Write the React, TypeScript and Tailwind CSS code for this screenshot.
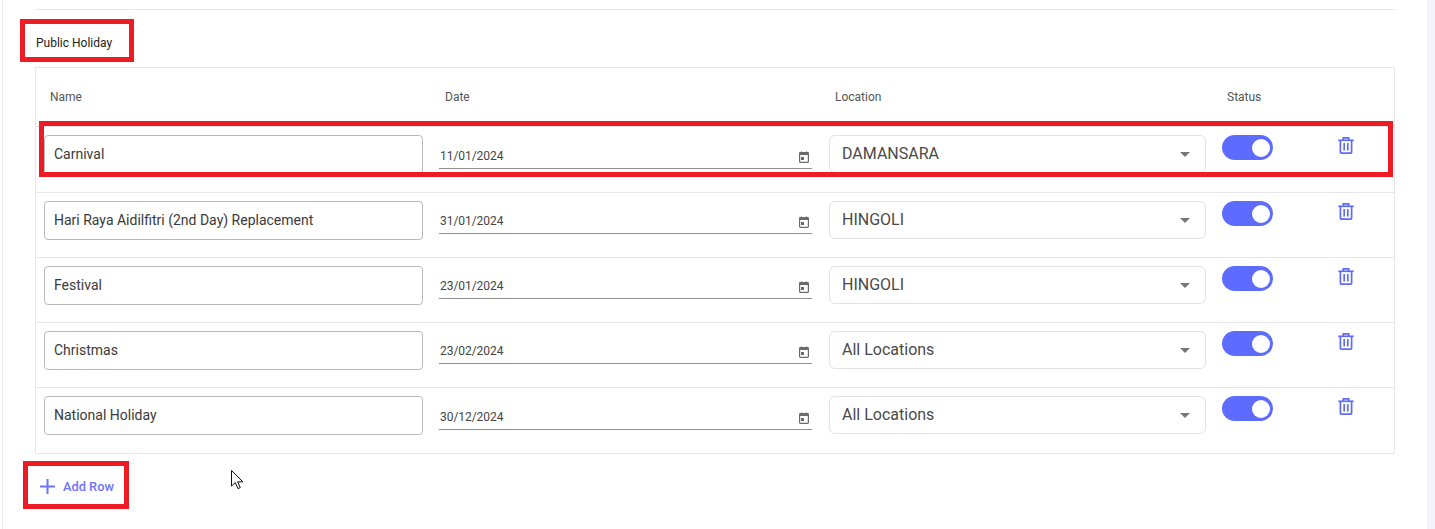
const rows = [
  { name: "Carnival", date: "11/01/2024", loc: "DAMANSARA", h: "h-[66px]", datePad: "pt-[8px]" },
  { name: "Hari Raya Aidilfitri (2nd Day) Replacement", date: "31/01/2024", loc: "HINGOLI", h: "h-[65px]", datePad: "pt-[7px]" },
  { name: "Festival", date: "23/01/2024", loc: "HINGOLI", h: "h-[65px]", datePad: "pt-[7px]" },
  { name: "Christmas", date: "23/02/2024", loc: "All Locations", h: "h-[65px]", datePad: "pt-[7px]" },
  { name: "National Holiday", date: "30/12/2024", loc: "All Locations", h: "h-[65px]", datePad: "pt-[8px]" },
];

function CalendarIcon() {
  return (
    <svg width="10" height="12" viewBox="0 0 10 12" className="shrink-0">
      <path d="M2.5 0.5v2M7.5 0.5v2" stroke="#6b6b6b" strokeWidth="1.2" />
      <rect x="0.6" y="1.6" width="8.8" height="9.8" rx="0.8" fill="none" stroke="#6b6b6b" strokeWidth="1.2" />
      <rect x="0.6" y="1.6" width="8.8" height="2.4" fill="#6b6b6b" />
      <rect x="2" y="6" width="3" height="3" fill="#6b6b6b" />
    </svg>
  );
}

function TrashIcon() {
  return (
    <svg width="16" height="17" viewBox="0 0 16 17" fill="none" stroke="#5f6bf5" strokeWidth="1.7">
      <path d="M0.3 3.3h15.4" />
      <path d="M5.3 3V0.9h5.4V3" />
      <path d="M2.4 3.3v11.6c0 .8.5 1.3 1.3 1.3h8.6c.8 0 1.3-.5 1.3-1.3V3.3" />
      <path d="M6.2 6v7.5M9.8 6v7.5" />
    </svg>
  );
}

function Row({ r, last }: { r: (typeof rows)[number]; last: boolean }) {
  return (
    <div className={"grid grid-cols-[395px_390px_393px_116px_1fr] " + r.h + (last ? "" : " border-b border-[#e5e7eb]")}>
      <div className="pl-2 pr-2 pt-2">
        <div className="h-[39px] border border-[#b9b9b9] rounded-[4px] flex items-center pl-[9px] text-[14px] text-[#3a3a3a]">
          {r.name}
        </div>
      </div>
      <div className={"pl-2 pr-[9px] " + r.datePad}>
        <div className="h-[34px] border-b border-[#8f8f8f] flex items-end justify-between pb-[5px] pr-[3px]">
          <span className="text-[12px] leading-[14px] tracking-[-0.05px] text-[#444] pl-px">{r.date}</span>
          <CalendarIcon />
        </div>
      </div>
      <div className="pl-2 pr-2 pt-2">
        <div className="h-[38px] border border-[#e2e2e8] rounded-[6px] flex items-center justify-between pl-3 pr-[15px] text-[16px] text-[#4a4a4a]">
          <span>{r.loc}</span>
          <span className="w-0 h-0 border-x-[5.5px] border-x-transparent border-t-[5px] border-t-[#777]" />
        </div>
      </div>
      <div className="pl-2 pt-2">
        <div className="w-[51px] h-[25px] rounded-full bg-[#5d6cff] flex items-center justify-end pr-[3px]">
          <span className="w-[18px] h-[18px] rounded-full bg-white" />
        </div>
      </div>
      <div className="pl-2 pt-[10px]">
        <TrashIcon />
      </div>
    </div>
  );
}

export default function App() {
  return (
    <div className="relative flex w-[1435px] h-[529px] overflow-hidden bg-white font-['Roboto',sans-serif]">
      <div className="w-[1427px] h-[529px] pl-[2px] shrink-0">
        <div className="h-full border-l border-[#e9e9ee] pl-[32px] pr-[32px]">
          <div className="h-[10px] border-b border-[#e5e7eb]" />
          <div className="h-[57px] flex items-end pb-[17px] pl-px text-[12px] leading-[14px] text-[#222]">Public Holiday</div>
          <div className="w-[1360px] border border-[#e5e7eb]">
            <div className="grid grid-cols-[395px_390px_393px_116px_1fr] h-[59px] border-b border-[#e5e7eb] items-center text-[12px] text-[#555] pb-[1px]">
              <div className="pl-[14px]">Name</div>
              <div className="pl-[14px]">Date</div>
              <div className="pl-[14px]">Location</div>
              <div className="pl-[13px]">Status</div>
              <div />
            </div>
            {rows.map((r, i) => (
              <Row key={r.name} r={r} last={i === rows.length - 1} />
            ))}
          </div>
          <div className="mt-[23px] flex items-center gap-[8px] pl-[5px] text-[12.8px] font-medium text-[#6c73ff]">
            <svg width="15" height="15" viewBox="0 0 15 15" stroke="#6c73ff" strokeWidth="2">
              <path d="M7.5 0v15M0 7.5h15" />
            </svg>
            <span>Add Row</span>
          </div>
        </div>
      </div>
      <div className="flex-1 bg-[#f3f3f9]" />

      {/* red annotation frames */}
      <div className="absolute left-[20px] top-[19px] w-[114px] h-[43px] border-[5px] border-[#ed1c24]" />
      <div className="absolute left-[39px] top-[121px] w-[1354px] h-[56px] border-[5px] border-[#ed1c24]" />
      <div className="absolute left-[23px] top-[461px] w-[106px] h-[48px] border-[5px] border-[#ed1c24]" />

      {/* mouse cursor */}
      <svg className="absolute left-[231px] top-[470px]" width="13" height="20" viewBox="0 0 13 20">
        <path d="M0.5 0.5v15.5l3.8-3.4 2.6 6 2.4-1-2.6-5.8h5.2z" fill="#fff" stroke="#111" strokeWidth="1" />
      </svg>
    </div>
  );
}
